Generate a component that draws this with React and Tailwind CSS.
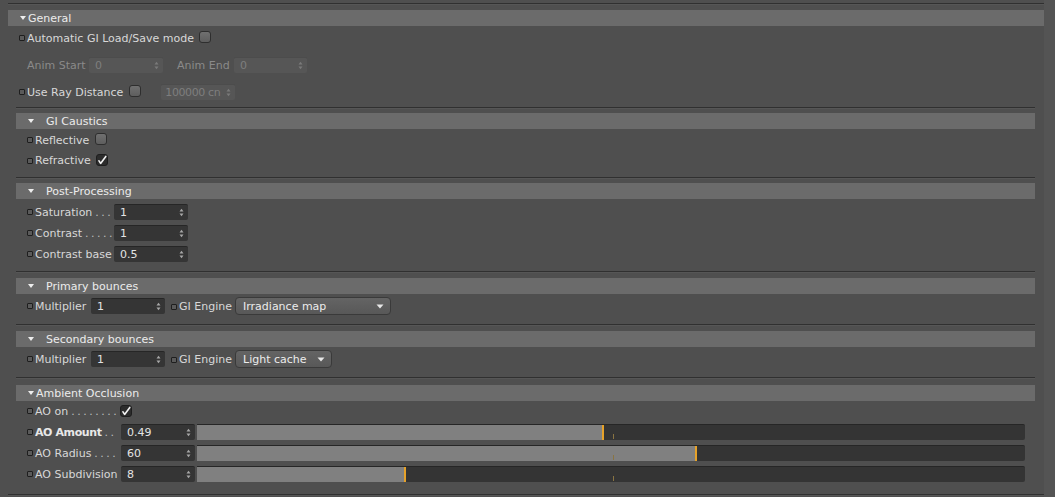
import React from "react";

// Small outlined "animation key" marker shown before each parameter label
function KeyDot() {
  return <span className="inline-block w-[6px] h-[6px] rounded-[1px] border border-[#1e1e1e] bg-[#5a5a5a] mr-[2px] shrink-0" />;
}

function Checkbox({ checked = false }) {
  return (
    <span
      className={
        "inline-flex items-center justify-center w-[12px] h-[12px] rounded-[3px] border shrink-0 " +
        (checked
          ? "bg-[#2c2c2c] border-[#1e1e1e]"
          : "bg-gradient-to-b from-[#707070] to-[#5e5e5e] border-[#2e2e2e]")
      }
    >
      {checked && (
        <svg width="10" height="10" viewBox="0 0 10 10">
          <path d="M2 5.8 L3.6 8.4 L8.8 1.4" fill="none" stroke="#f2f2f2" strokeWidth="1.6" strokeLinecap="round" strokeLinejoin="round" />
        </svg>
      )}
    </span>
  );
}

function Spinner({ dim = false }) {
  const c = dim ? "#7a7a7a" : "#a8a8a8";
  return (
    <svg width="5" height="9" viewBox="0 0 5 9" className="shrink-0">
      <path d="M0.5 3.5 L2.5 0.8 L4.5 3.5 Z" fill={c} />
      <path d="M0.5 5.5 L2.5 8.2 L4.5 5.5 Z" fill={c} />
    </svg>
  );
}

function NumField({ value, w, dim = false, tight = false }) {
  return (
    <div
      className={
        "h-[16px] flex items-center justify-between pr-[4px] gap-[2px] rounded-[2px] border-t shrink-0 " +
        (tight ? "pl-[4px] " : "pl-[6px] ") +
        (dim ? "bg-[#565656] border-[#4c4c4c] text-[#7e7e7e]" : "bg-[#353535] border-[#262626] text-[#e4e4e4]") +
        " " +
        w
      }
    >
      <span className={"whitespace-nowrap " + (tight ? "tracking-[-0.4px]" : "")}>{value}</span>
      <Spinner dim={dim} />
    </div>
  );
}

function Dropdown({ value, w }) {
  return (
    <div className={"h-[18px] flex items-center justify-between pl-[7px] pr-[6px] rounded-[4px] border border-[#3a3a3a] bg-gradient-to-b from-[#646464] to-[#585858] text-[#ececec] shrink-0 " + w}>
      <span>{value}</span>
      <svg width="8" height="5" viewBox="0 0 8 5">
        <path d="M0.5 0.5 L7.5 0.5 L4 4.5 Z" fill="#e8e8e8" />
      </svg>
    </div>
  );
}

function Slider({ fill }) {
  return (
    <div className="relative h-[16px] flex-1 ml-[2px] bg-[#343434] border-t border-[#262626] rounded-r-[2px] overflow-hidden">
      <div className="absolute left-0 top-0 bottom-0 bg-[#808080]" style={{ width: fill }} />
      <div className="absolute top-0 bottom-0 w-[2px] bg-[#e6a22a]" style={{ left: fill - 1 }} />
      <div className="absolute left-[416px] bottom-[1px] w-[1px] h-[5px] bg-[#8a7442]" />
    </div>
  );
}

function Line() {
  return <div className="h-[2px] border-t border-[#303030] border-b border-b-[#565656]" />;
}

// Leader dots between a label and its field
function Dots({ n }) {
  return <span className="tracking-[-0.5px] text-[#bdbdbd]">{" .".repeat(n)}</span>;
}

function Header({ title, tight = false }) {
  return (
    <div className="h-[16px] bg-[#6b6b6b] flex items-center pl-[12px] text-[#ececec]">
      <svg width="6" height="4" viewBox="0 0 6 4" className={tight ? "mr-[2px]" : "mr-[12px]"}>
        <path d="M0 0 L6 0 L3 4 Z" fill="#eeeeee" />
      </svg>
      <span>{title}</span>
    </div>
  );
}

function EngineRow({ engine, w }) {
  return (
    <div className="mt-[4px] h-[16px] flex items-center pl-[11px]">
      <KeyDot />
      <span className="w-[56px]">Multiplier</span>
      <NumField value="1" w="w-[74px]" />
      <span className="ml-[6px]"><KeyDot /></span>
      <span className="w-[56px]">GI Engine</span>
      <Dropdown value={engine} w={w} />
    </div>
  );
}

export default function App() {
  return (
    <div className="w-[1055px] h-[497px] bg-[#4f4f4f] flex font-['DejaVu_Sans',sans-serif] text-[11px] leading-none text-[#d8d8d8] overflow-hidden">
      <div className="w-[1044px] pl-[8px] pt-[3px] flex flex-col">
        <Line />
        {/* General */}
        <div className="mt-[5px]">
          <Header title="General" tight />
        </div>
        <div className="h-[24px] flex items-center pl-[11px]">
          <KeyDot />
          <span>Automatic GI Load/Save mode</span>
          <span className="ml-[5px]"><Checkbox /></span>
        </div>
        <div className="h-[30px] flex items-center pl-[19px] text-[#8a8a8a]">
          <span className="w-[62px]">Anim Start</span>
          <NumField value="0" w="w-[74px]" dim />
          <span className="ml-[14px] w-[57px]">Anim End</span>
          <NumField value="0" w="w-[73px]" dim />
        </div>
        <div className="h-[24px] flex items-center pl-[11px]">
          <KeyDot />
          <span>Use Ray Distance</span>
          <span className="ml-[6px]"><Checkbox /></span>
          <span className="ml-[20px]"><NumField value="100000 cn" w="w-[74px]" dim tight /></span>
        </div>

        {/* Nested sections */}
        <div className="pl-[8px] pr-[9px] flex flex-col">
          <div className="mt-[3px]"><Line /></div>
          <div className="mt-[4px]"><Header title="GI Caustics" /></div>
          <div className="h-[22px] flex items-center pl-[11px]">
            <KeyDot />
            <span>Reflective</span>
            <span className="ml-[6px]"><Checkbox /></span>
          </div>
          <div className="h-[19px] flex items-center pl-[11px]">
            <KeyDot />
            <span>Refractive</span>
            <span className="ml-[5px]"><Checkbox checked /></span>
          </div>

          <div className="mt-[7px]"><Line /></div>
          <div className="mt-[4px]"><Header title="Post-Processing" /></div>
          <div className="mt-[5px] flex flex-col gap-[5px]">
            {[
              ["Saturation", 3, "1"],
              ["Contrast", 5, "1"],
              ["Contrast base", 0, "0.5"],
            ].map(([l, d, v]) => (
              <div key={l} className="h-[16px] flex items-center pl-[11px]">
                <KeyDot />
                <span className="w-[79px] whitespace-pre">
                  {l}
                  {d > 0 && <Dots n={d} />}
                </span>
                <NumField value={v} w="w-[74px]" />
              </div>
            ))}
          </div>

          <div className="mt-[9px]"><Line /></div>
          <div className="mt-[5px]"><Header title="Primary bounces" /></div>
          <EngineRow engine="Irradiance map" w="w-[156px]" />

          <div className="mt-[10px]"><Line /></div>
          <div className="mt-[5px]"><Header title="Secondary bounces" /></div>
          <EngineRow engine="Light cache" w="w-[97px]" />

          <div className="mt-[10px]"><Line /></div>
          <div className="mt-[6px]"><Header title="Ambient Occlusion" tight /></div>
          <div className="mt-[2px] h-[16px] flex items-center pl-[11px]">
            <KeyDot />
            <span className="w-[85px] whitespace-pre">
              AO on<Dots n={8} />
            </span>
            <Checkbox checked />
          </div>
          <div className="mt-[5px] flex flex-col gap-[5px] pr-[10px]">
            {[
              ["AO Amount", 2, "0.49", 406, true],
              ["AO Radius", 4, "60", 499, false],
              ["AO Subdivision", 0, "8", 208, false],
            ].map(([l, d, v, f, b]) => (
              <div key={l} className="h-[16px] flex items-center pl-[11px]">
                <KeyDot />
                <span className="w-[86px] whitespace-pre">
                  <span className={b ? "font-bold tracking-[-0.4px] text-[#e8e8e8]" : ""}>{l}</span>
                  {d > 0 && <Dots n={d} />}
                </span>
                <NumField value={v} w="w-[74px]" />
                <Slider fill={f} />
              </div>
            ))}
          </div>
        </div>
        <div className="mt-[12px]"><Line /></div>
      </div>
      <div className="flex-1 bg-[#545454]" />
    </div>
  );
}
